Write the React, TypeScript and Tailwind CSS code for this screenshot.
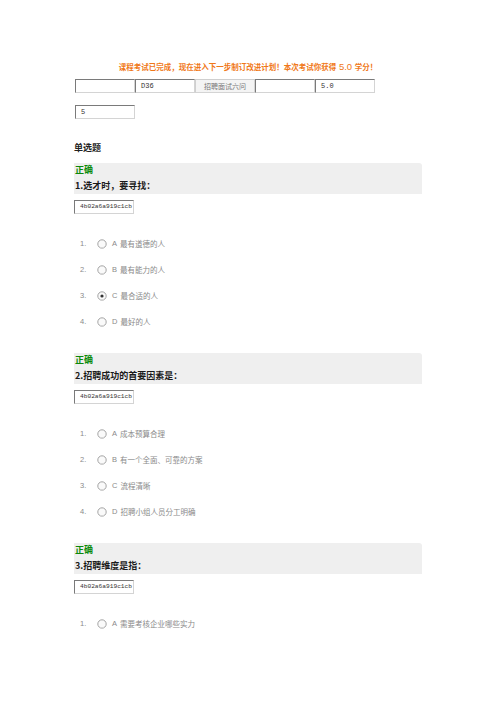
const boxBase =
  "h-[14px] w-[60px] border border-b-[#d4d4d4] border-r-[#d4d4d4] leading-[12px] overflow-hidden whitespace-nowrap";
const boxCls =
  boxBase + " border-t-[#7a7a7a] border-l-[#7a7a7a] bg-white pl-[5px] text-[7px] text-[#333] font-['Liberation_Mono',monospace]";
const hashCls =
  boxBase + " border-t-[#7a7a7a] border-l-[#7a7a7a] bg-white pl-[5px] text-[6.2px] text-[#333] font-['Liberation_Mono',monospace]";
const greyCls =
  boxBase + " border-t-[#cfcfcf] border-l-[#cfcfcf] bg-[#f4f4f4] pl-[8px] text-[7px] text-[#777] font-['Noto_Sans_CJK_SC',serif]";

const questions = [
  {
    title: "1.选才时，要寻找：",
    options: ["A 最有道德的人", "B 最有能力的人", "C 最合适的人", "D 最好的人"],
    checked: 2,
  },
  {
    title: "2.招聘成功的首要因素是：",
    options: ["A 成本预算合理", "B 有一个全面、可靠的方案", "C 流程清晰", "D 招聘小组人员分工明确"],
    checked: -1,
  },
  {
    title: "3.招聘维度是指：",
    options: ["A 需要考核企业哪些实力"],
    checked: -1,
  },
];

const Radio = ({ on }: { on: boolean }) => (
  <svg width="10" height="10" viewBox="0 0 10 10" className="shrink-0">
    <circle cx="5" cy="5" r="4.2" fill="#fafafa" stroke="#9a9a9a" strokeWidth="0.9" />
    <path d="M2.2 7.8 A4 4 0 0 0 7.8 7.8" stroke="#d8d8d8" strokeWidth="0.9" fill="none" />
    {on && <circle cx="5" cy="5" r="1.6" fill="#333" />}
  </svg>
);

const Question = ({ q }: { q: (typeof questions)[number] }) => (
  <div className="flex flex-col">
    <div className="w-[348px] h-[31px] bg-[#efefef] rounded-tr-[3px] flex flex-col pl-[1px]">
      <div className="h-[14px] text-[9px] leading-[13px] font-bold text-[#0a8a0a] font-['Noto_Sans_CJK_SC',sans-serif]">
        正确
      </div>
      <div className="h-[17px] text-[9px] leading-[18px] font-bold text-[#1a1a1a] font-['Noto_Sans_CJK_SC',sans-serif]">
        {q.title}
      </div>
    </div>
    <div className="mt-[6px] flex">
      <div className={hashCls}>4b02a6a919c1cb</div>
    </div>
    <div className="mt-[17px] flex flex-col">
      {q.options.map((o, i) => (
        <div key={i} className="h-[26px] flex items-center text-[7.5px] text-[#8a8a8a]">
          <span className="w-[23px] pl-[6px] font-['Liberation_Sans',sans-serif]">{i + 1}.</span>
          <Radio on={i === q.checked} />
          <span className="ml-[5px] font-['Liberation_Sans',sans-serif]">{o.slice(0, 1)}</span>
          <span className="ml-[3px] font-['Noto_Sans_CJK_SC',serif]">{o.slice(2)}</span>
        </div>
      ))}
    </div>
  </div>
);

const App = () => {
  return (
    <div className="w-[496px] h-[702px] bg-white overflow-hidden pl-[74px]">
      <div className="pt-[59px] w-[348px] h-[71px] text-center leading-[10px]">
        <span className="text-[7.5px] leading-[10px] font-bold text-[#f07818] font-['Noto_Sans_CJK_SC',sans-serif]">
          课程考试已完成，现在进入下一步制订改进计划！本次考试你获得
          <span className="font-normal text-[9.5px] font-['Liberation_Sans',sans-serif]"> 5.0 </span>
          学分！
        </span>
      </div>
      <div className="mt-[8px] flex pl-[1px]">
        <div className={boxCls}></div>
        <div className={boxCls}>D36</div>
        <div className={greyCls}>招聘面试六问</div>
        <div className={boxCls}></div>
        <div className={boxCls}>5.0</div>
      </div>
      <div className="mt-[12px] flex pl-[1px]">
        <div className={boxCls}>5</div>
      </div>
      <div className="mt-[22px] h-[14px] text-[9px] leading-[14px] font-bold text-[#222] font-['Noto_Sans_CJK_SC',serif]">
        单选题
      </div>
      <div className="mt-[8px] flex flex-col gap-[18px]">
        {questions.map((q, i) => (
          <Question key={i} q={q} />
        ))}
      </div>
    </div>
  );
};

export default App;
